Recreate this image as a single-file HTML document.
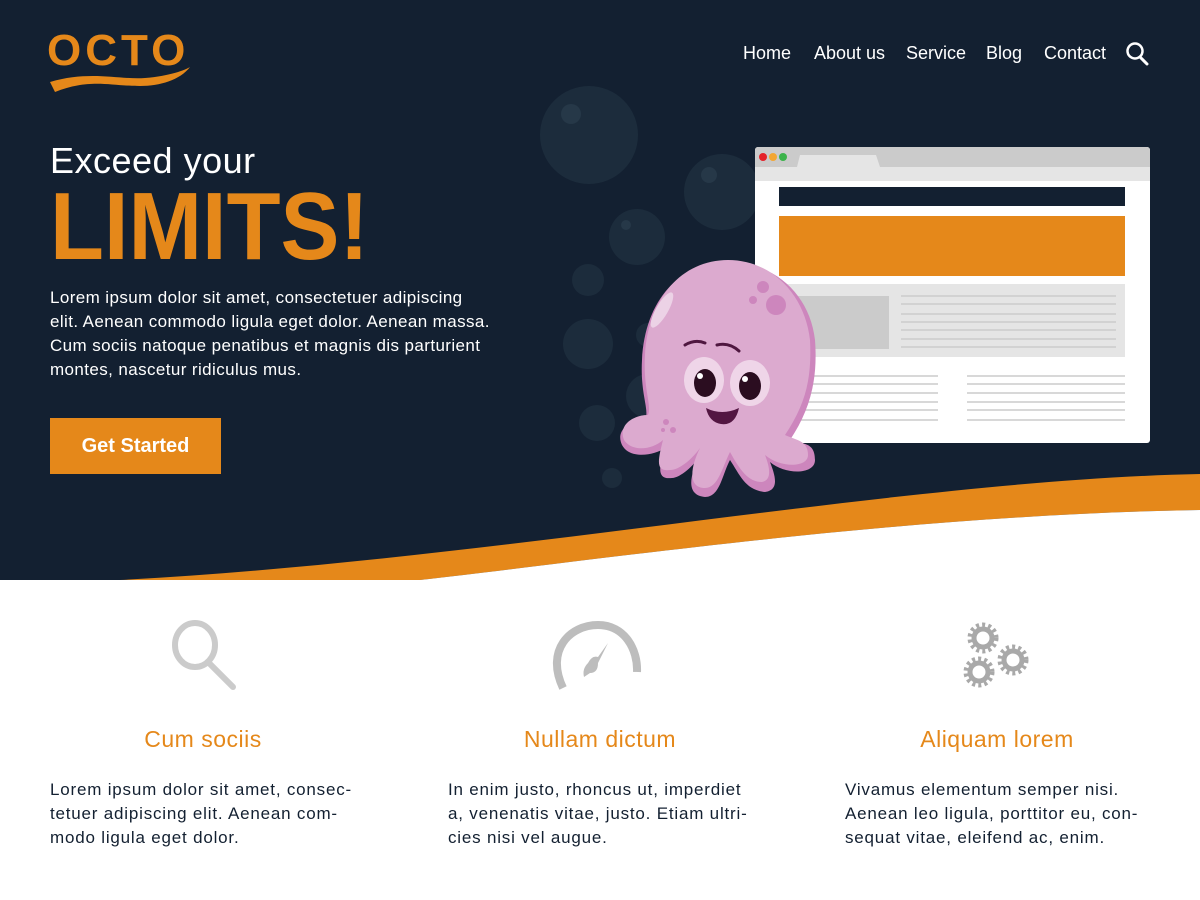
<!DOCTYPE html>
<html><head><meta charset="utf-8"><style>
*{margin:0;padding:0;box-sizing:border-box}
body{width:1200px;height:900px;overflow:hidden;background:#fff;font-family:"Liberation Sans",sans-serif;position:relative}
.hero{position:absolute;left:0;top:0;width:1200px;height:580px;background:#132031}
.nav{position:absolute;top:43px;font-size:18px;color:#fff}
.abs{position:absolute}
h3{position:absolute;color:#e5881a;font-size:23px;font-weight:normal;text-align:center;width:300px;letter-spacing:0.5px}
.p{position:absolute;font-size:17px;line-height:24px;color:#132031;letter-spacing:0.8px}
</style></head><body>
<div class="hero"></div>
<svg class="abs" style="left:0;top:0" width="1200" height="600">
<g fill="#1c2c3c">
<circle cx="589" cy="135" r="49"/><circle cx="722" cy="192" r="38"/><circle cx="637" cy="237" r="28"/>
<circle cx="588" cy="280" r="16"/><circle cx="588" cy="344" r="25"/><circle cx="648" cy="335" r="12"/>
<circle cx="597" cy="423" r="18"/><circle cx="612" cy="478" r="10"/><circle cx="648" cy="396" r="22"/>
</g>
<g fill="#263848"><circle cx="571" cy="114" r="10"/><circle cx="709" cy="175" r="8"/><circle cx="626" cy="225" r="5"/></g>
<path d="M120 580 C 500 560 900 480 1200 474 L1200 510 C 900 515 600 560 420 580 Z" fill="#e5881a"/>
<path d="M420 580 C 600 560 900 515 1200 510 L1200 600 L0 600 L0 580 Z" fill="#fff"/>
<rect x="755" y="147" width="395" height="296" rx="3" fill="#fff"/>
<path d="M755 150 a3 3 0 0 1 3 -3 h389 a3 3 0 0 1 3 3 v17 h-395z" fill="#cbcbcb"/>
<rect x="755" y="167" width="395" height="14" fill="#e5e5e5"/>
<path d="M797 167 l3 -12 h76 l4 12z" fill="#e5e5e5"/>
<circle cx="763" cy="157" r="4" fill="#e5222a"/><circle cx="773" cy="157" r="4" fill="#f3a633"/><circle cx="783" cy="157" r="4" fill="#3bb34a"/>
<rect x="779" y="187" width="346" height="19" fill="#132031"/>
<rect x="779" y="216" width="346" height="60" fill="#e5881a"/>
<rect x="779" y="284" width="346" height="73" fill="#e5e5e5"/>
<rect x="779" y="296" width="110" height="53" fill="#cbcbcb"/>
<g stroke="#cbcbcb" stroke-width="1.5">
<path d="M901 296h215M901 304h215M901 314h215M901 322h215M901 330h215M901 339h215M901 347h215"/>
<path d="M779 376h159M779 384h159M779 393h159M779 402h159M779 410h159M779 420h159"/>
<path d="M967 376h158M967 384h158M967 393h158M967 402h158M967 410h158M967 420h158"/>
</g>
<g>
<path d="M728 262 C 680 262 645 300 642 360 C 640 395 650 410 645 420 C 630 420 615 430 622 445 C 630 460 655 455 665 448 C 660 465 655 480 672 478 C 680 478 695 465 700 455 C 690 475 685 495 705 497 C 720 497 722 475 730 460 C 740 475 745 490 765 492 C 780 490 775 475 770 462 C 785 475 815 475 815 460 C 815 440 800 445 790 440 C 810 410 818 380 815 340 C 810 295 775 262 728 262 Z" fill="#cd86bd"/>
<path d="M728 260 C 682 260 648 298 645 355 C 643 390 652 405 648 415 C 633 415 618 425 624 440 C 632 452 652 450 663 440 C 658 460 655 472 670 470 C 680 470 693 458 700 448 C 690 468 688 488 705 488 C 718 488 722 468 730 452 C 740 470 748 482 762 482 C 772 480 770 468 765 455 C 780 468 808 468 808 455 C 808 440 795 440 785 435 C 805 405 812 380 810 340 C 805 295 772 260 728 260 Z" fill="#dcaacf"/>
<ellipse cx="662" cy="310" rx="6" ry="20" transform="rotate(30 662 310)" fill="#ecd2e6"/>
<circle cx="763" cy="287" r="6" fill="#cd86bd"/><circle cx="776" cy="305" r="10" fill="#cd86bd"/><circle cx="753" cy="300" r="4" fill="#cd86bd"/>
<path d="M685 345 q10 -6 20 -2 M717 345 q12 -3 22 6" stroke="#4f1740" stroke-width="3" fill="none" stroke-linecap="round"/>
<ellipse cx="704" cy="380" rx="20" ry="23" fill="#efd5e8"/><ellipse cx="750" cy="383" rx="20" ry="23" fill="#efd5e8"/>
<ellipse cx="705" cy="383" rx="11" ry="14" fill="#2b0d20"/><ellipse cx="750" cy="386" rx="11" ry="14" fill="#2b0d20"/>
<circle cx="700" cy="376" r="3" fill="#fff"/><circle cx="745" cy="379" r="3" fill="#fff"/>
<path d="M706 408 q16 8 33 0 q-4 18 -18 16 q-12 -2 -15 -16z" fill="#531642"/>
<circle cx="666" cy="422" r="3" fill="#cd86bd"/><circle cx="673" cy="430" r="3" fill="#cd86bd"/><circle cx="663" cy="430" r="2" fill="#cd86bd"/>
</g>
<text x="47" y="65" font-family="Liberation Sans" font-weight="bold" font-size="44" fill="#e5881a" letter-spacing="4">OCTO</text>
<path d="M50 82 C 90 70 120 80 145 78 C 170 76 185 70 190 67 C 180 80 160 86 140 86 C 110 86 90 78 55 92 Z" fill="#e5881a"/>
<circle cx="1135" cy="51" r="7.5" stroke="#fff" stroke-width="2.5" fill="none"/>
<path d="M1140 57 l7 7" stroke="#fff" stroke-width="3" stroke-linecap="round"/>
</svg>
<div class="nav" style="left:743px">Home</div>
<div class="nav" style="left:814px">About us</div>
<div class="nav" style="left:906px">Service</div>
<div class="nav" style="left:986px">Blog</div>
<div class="nav" style="left:1044px">Contact</div>
<div class="abs" style="left:50px;top:140px;color:#fff;font-size:36px;letter-spacing:0.5px">Exceed your</div>
<div class="abs" style="left:50px;top:179px;color:#e5881a;font-size:96px;line-height:1;font-weight:bold;transform:scaleX(0.92);transform-origin:left top;white-space:nowrap">LIMITS!</div>
<div class="abs" style="left:50px;top:286px;width:520px;color:#fff;font-size:17px;line-height:24px;letter-spacing:0.4px;white-space:nowrap">Lorem ipsum dolor sit amet, consectetuer adipiscing<br>elit. Aenean commodo ligula eget dolor. Aenean massa.<br>Cum sociis natoque penatibus et magnis dis parturient<br>montes, nascetur ridiculus mus.</div>
<div class="abs" style="left:50px;top:418px;width:171px;height:56px;background:#e5881a;color:#fff;font-size:20px;font-weight:bold;line-height:56px;text-align:center">Get Started</div>
<svg class="abs" style="left:0;top:600px" width="1200" height="110">
<ellipse cx="195" cy="45" rx="20" ry="22" stroke="#cbcbcb" stroke-width="6" fill="none"/>
<path d="M209 63 l24 24" stroke="#cbcbcb" stroke-width="6" stroke-linecap="round"/>
<path d="M563 88 C 545 50 570 25 598 25 C 625 25 638 50 637 72" stroke="#bdbdbd" stroke-width="8" fill="none"/>
<path d="M608 43 l-10 20 q0 10 -8 10 l-6 4 q-2 -8 4 -14 q4 -8 10 -6z" fill="#bdbdbd"/>
<g fill="none" stroke="#a9a9a9" stroke-width="5" stroke-dasharray="3 3">
<circle cx="983" cy="38" r="13"/><circle cx="1013" cy="60" r="13"/><circle cx="979" cy="72" r="13"/>
</g>
<g fill="none" stroke="#a9a9a9" stroke-width="5">
<circle cx="983" cy="38" r="9"/><circle cx="1013" cy="60" r="9"/><circle cx="979" cy="72" r="9"/>
</g>
</svg>
<h3 style="left:53px;top:726px">Cum sociis</h3>
<h3 style="left:450px;top:726px">Nullam dictum</h3>
<h3 style="left:847px;top:726px">Aliquam lorem</h3>
<div class="p" style="left:50px;top:778px;width:340px">Lorem ipsum dolor sit amet, consec-<br>tetuer adipiscing elit. Aenean com-<br>modo ligula eget dolor.</div>
<div class="p" style="left:448px;top:778px;width:340px">In enim justo, rhoncus ut, imperdiet<br>a, venenatis vitae, justo. Etiam ultri-<br>cies nisi vel augue.</div>
<div class="p" style="left:845px;top:778px;width:340px">Vivamus elementum semper nisi.<br>Aenean leo ligula, porttitor eu, con-<br>sequat vitae, eleifend ac, enim.</div>
</body></html>
